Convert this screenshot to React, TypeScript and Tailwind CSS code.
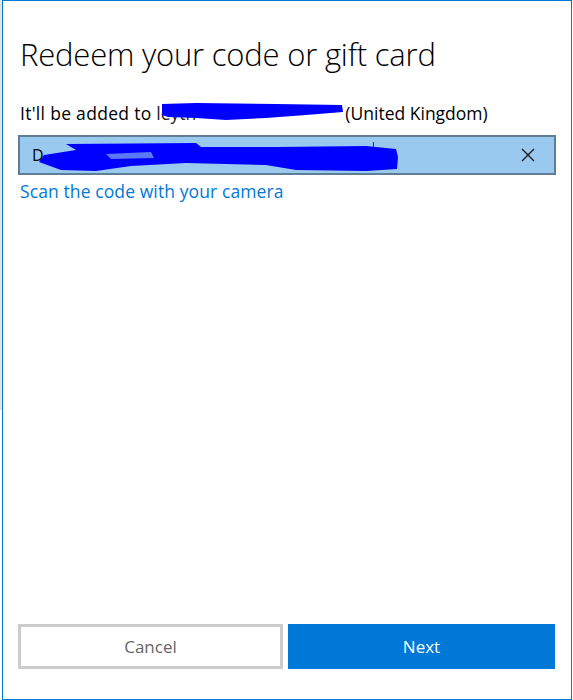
import React from "react";

const font = { fontFamily: '"Open Sans", "Noto Sans", sans-serif' };

function Scribble({ w, h, d }: { w: number; h: number; d: string }) {
  return (
    <svg width={w} height={h} viewBox={`0 0 ${w} ${h}`} className="absolute left-0 top-0">
      <path d={d} fill="#0000ff" />
    </svg>
  );
}

export default function App() {
  return (
    <div className="w-[573px] h-[700px] bg-white flex" style={font}>
      {/* left edge of the window behind */}
      <div className="w-[2px] h-[410px] bg-[#e3e3e3]" />
      <div className="w-[570px] h-[700px] border border-[#0078d7] flex flex-col pl-[15px] pr-[16px]">
        <h1 className="mt-[33px] pl-[2px] text-[31px] leading-[40px] font-light text-black tracking-[-0.2px]">
          Redeem your code or gift card
        </h1>

        <div className="mt-[28px] text-[17.5px] leading-[22px] text-black flex items-center pl-[2px]">
          <span className="tracking-[0.3px]">It'll be added to&nbsp;</span>
          <span className="relative inline-block w-[189px] h-[22px]">
            <span className="text-[#222]">leyth</span>
            <Scribble
              w={189}
              h={24}
              d="M6 2 L40 1 L120 2 L186 3 L187 10 L150 13 L110 16 L70 18 L40 16 L12 15 L6 13 Z"
            />
          </span>
          <span>(United Kingdom)</span>
        </div>

        <div className="mt-[11px] h-[40px] w-[538px] border-2 border-[#5f7d96] bg-[#99c9ef] flex items-center pl-[12px] pr-[19px]">
          <div className="relative flex-1 h-[32px] text-[16px] leading-[32px] text-black">
            <span>D</span>
            <span className="absolute left-[341px] top-[3px] w-[1px] h-[16px] bg-[#333]" />
            <svg width="370" height="34" viewBox="0 0 370 34" className="absolute left-[4px] top-[2px]">
              <path
                d="M30 3 L160 2 L165 6 L240 6 L330 5 L360 8 L362 16 L361 28 L330 30 L260 29 L230 24 L150 22 L95 25 L60 30 L25 29 L3 21 L8 14 L40 9 Z"
                fill="#0000ff"
              />
              <path d="M70 13 L115 11 L118 17 L75 18 Z" fill="#99c9ef" opacity="0.6" />
            </svg>
          </div>
          <svg width="14" height="14" viewBox="0 0 14 14" className="shrink-0">
            <path d="M1 1 L13 13 M13 1 L1 13" stroke="#1a1a1a" strokeWidth="1.4" fill="none" />
          </svg>
        </div>

        <a className="mt-[4px] pl-[2px] text-[17.5px] leading-[24px] text-[#0078d7] tracking-[0.1px] w-fit">
          Scan the code with your camera
        </a>

        <div className="flex-1" />

        <div className="flex gap-[5px] mb-[30px] w-[537px]">
          <button className="w-[265px] h-[45px] border-[3px] border-[#cccccc] bg-white text-[17px] text-[#666666]">
            Cancel
          </button>
          <button className="w-[267px] h-[45px] bg-[#0078d7] text-[17px] text-white">Next</button>
        </div>
      </div>
    </div>
  );
}
